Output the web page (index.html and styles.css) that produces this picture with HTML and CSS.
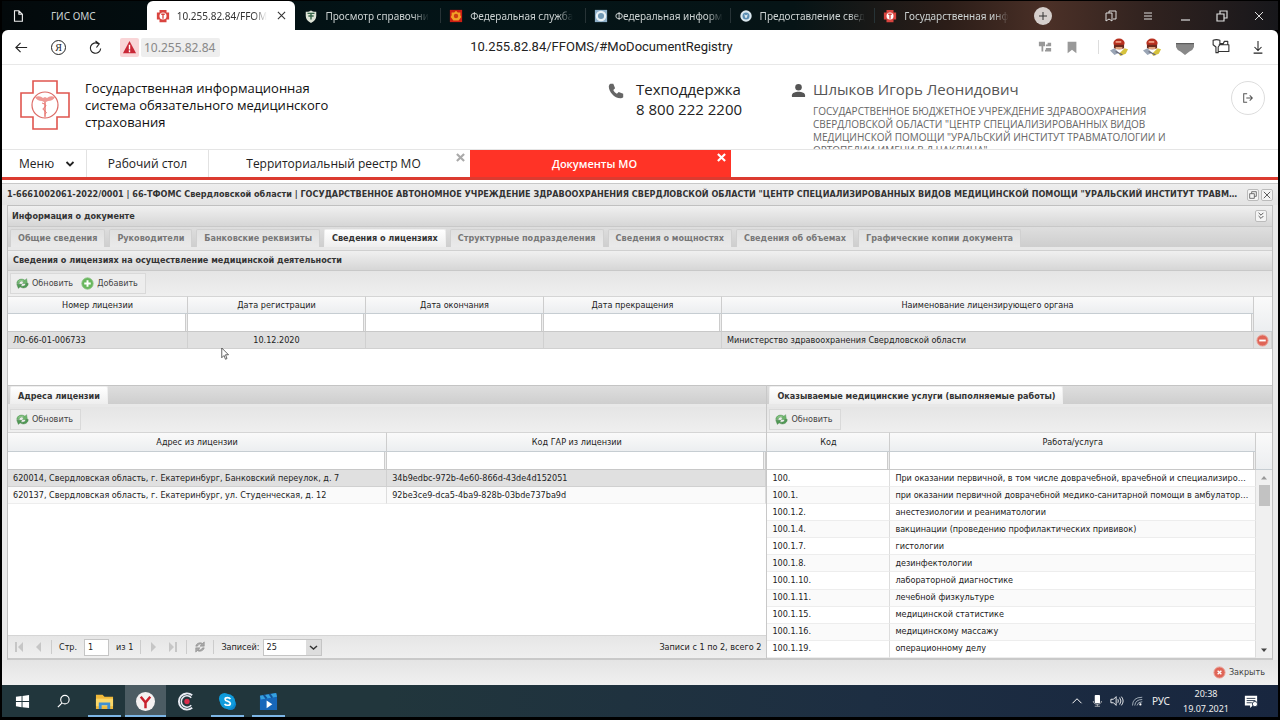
FILE: index.html
```html
<!DOCTYPE html>
<html lang="ru">
<head>
<meta charset="utf-8">
<title>10.255.82.84/FFOMS</title>
<link rel="stylesheet" href="styles.css">
</head>
<body>
<svg class="defs" aria-hidden="true">
  <symbol id="refresh" viewBox="0 0 16 16"><path d="M1 8C1 3 7 1 11 4l2-2 1 6-6 0 1.500-2C7 4 4 5 4 8z" fill="#6db56b" stroke="#56945a" stroke-width=".6"/><path d="M15 8c0 5-6 7-10 4l-2 2-2-5 6 0-1 2c3 1 6 0 6-3z" fill="#4f9a55" stroke="#447f45" stroke-width=".6"/><path d="M3 6q2-3 6-2" fill="none" stroke="#b4dcae" stroke-width=".8"/></symbol>
  <symbol id="add" viewBox="0 0 16 16"><circle cx="8" cy="8" r="7" fill="#68b75d" stroke="#8bc283"/><path d="M8 4v8M4 8h8" stroke="#fff" stroke-width="2.4"/></symbol>
  <symbol id="cross" viewBox="0 0 10 10"><path d="M1 1l8 8M9 1L1 9" fill="none" stroke="currentColor" stroke-width="1.2"/></symbol>
  <symbol id="emblem" viewBox="0 0 16 16"><path d="M4 1h8v3h3v8h-3v3H4v-3H1V4h3z" fill="#d9443f"/><circle cx="8" cy="8" r="4" fill="#fff"/><path d="M6 6h4M8 6v5" stroke="#d9443f" stroke-width="1.5"/></symbol>
  <symbol id="mail" viewBox="0 0 16 16"><ellipse cx="8" cy="4.500" rx="5" ry="4" fill="#b8301f"/><path d="M3.500 6h9v3q-4 2-9 0z" fill="#6c2a1c"/><path d="M5 3.500h5" stroke="#f1a287" stroke-width="1.500"/><path d="M5 8h6v2H5z" fill="#e0a27c"/><path d="M0 11l4-2 4 4-4 2z" fill="#9aa5b5"/><path d="M8 14l5-5 3 1-2 4-5 2z" fill="#d6c23c"/><path d="M5 12l6 3" stroke="#667" stroke-width="1"/></symbol>
  <symbol id="restore" viewBox="0 0 12 12"><path d="M1 4h7v7H1zM4 4V1h7v7H8" fill="none" stroke="currentColor" stroke-width="1.2"/></symbol>
</svg>
<div class="screen">
  <header class="tabbar">
    <nav class="tabs">
      <div class="btab first"><svg class="fav" viewBox="0 0 16 16"><path d="M4 2h5l4 4v8H4zM9 2v4h4" fill="none" stroke="#eee" stroke-width="1.3"/></svg><span>ГИС ОМС</span></div>
      <div class="btab active"><svg class="fav"><use href="#emblem"/></svg><span>10.255.82.84/FFOM</span><button class="plain" aria-label="Закрыть вкладку"><svg class="i10"><use href="#cross"/></svg></button></div>
      <div class="btab"><svg class="fav" viewBox="0 0 16 16"><path d="M2 3q6 0 6-2 0 2 6 2v5q0 5-6 8-6-3-6-8z" fill="#dde3d6"/><path d="M4 5h8M5 8h6M8 5v7" stroke="#37664a" stroke-width="1.600"/></svg><span>Просмотр справочни</span></div>
      <div class="btab"><svg class="fav" viewBox="0 0 16 16"><path fill="#cc1f14" d="M1 1h14v14H1z"/><path d="M8 2l2 2 3 0 0 3 1 2-3 4H5L2 9l1-2V4h3z" fill="#f2a026"/><circle cx="8" cy="8" r="2.500" fill="#cc3b14"/></svg><span>Федеральная служба</span></div>
      <div class="btab"><svg class="fav" viewBox="0 0 16 16"><path fill="#8fb0c9" d="M1 1h14v14H1z"/><circle cx="8" cy="8" r="6" fill="#e9f1f5"/><circle cx="8" cy="8" r="3.500" fill="#7199b5"/></svg><span>Федеральная информ</span></div>
      <div class="btab"><svg class="fav" viewBox="0 0 16 16"><circle cx="8" cy="8" r="6.500" fill="#dbe8ef"/><circle cx="8" cy="8" r="4" fill="#5a8db2"/><path d="M6 6l2 1 2-1-1 4H7z" fill="#dbe8ef"/></svg><span>Предоставление свед</span></div>
      <div class="btab"><svg class="fav"><use href="#emblem"/></svg><span>Государственная инф</span></div>
    </nav>
    <button class="newtab" aria-label="Новая вкладка"><svg viewBox="0 0 10 10"><path d="M5 1v8M1 5h8" stroke="#333" stroke-width="1"/></svg></button>
    <div class="winbtns">
      <button class="plain" aria-label="Закладки"><svg viewBox="0 0 12 12"><path d="M1 3h6v8L4 9l-3 2zM4 3V1h7v8l-3 0" fill="none" stroke="currentColor"/></svg></button>
      <button class="plain" aria-label="Настройки"><svg viewBox="0 0 12 12"><path d="M2 3h8M2 6h8M2 9h8" stroke="currentColor"/></svg></button>
      <button class="plain" aria-label="Свернуть"><svg viewBox="0 0 12 12"><path d="M2 10h9" stroke="currentColor" stroke-width="1.200"/></svg></button>
      <button class="plain" aria-label="Развернуть"><svg viewBox="0 0 12 12"><use href="#restore"/></svg></button>
      <button class="plain" aria-label="Закрыть"><svg viewBox="0 0 12 12"><path d="M2 2l8 8M10 2l-8 8" stroke="currentColor"/></svg></button>
    </div>
  </header>

  <div class="browser">
    <div class="addressbar">
      <div class="addr-left">
        <button class="plain" aria-label="Назад"><svg class="i16" viewBox="0 0 16 16"><path d="M14 8H3M7 3L2 8l5 5" fill="none" stroke="#222" stroke-width="1.200"/></svg></button>
        <button class="plain ya" aria-label="Яндекс">Я</button>
        <button class="plain" aria-label="Обновить страницу"><svg class="i16" viewBox="0 0 16 16"><path d="M11 4a5.500 5.500 0 102.500 5M8 1l4 3-3 4" fill="none" stroke="#222" stroke-width="1.200"/></svg></button>
        <div class="site"><span class="warn"><svg viewBox="0 0 16 16"><path d="M8 1l7 13H1z" fill="#c92736"/><path d="M8 5v5M8 11v2" stroke="#fff" stroke-width="1.500"/></svg></span><span class="host">10.255.82.84</span></div>
      </div>
      <div class="url">10.255.82.84/FFOMS/#MoDocumentRegistry</div>
      <div class="addr-right">
        <svg viewBox="0 0 16 16" fill="#999"><path d="M1 2h7v5H6v6H4V7H1zM9 5h2V3h4v4H9zM9 9h6v4H8v-2h1z"/></svg>
        <svg class="mark" viewBox="0 0 16 16"><path d="M3 2h10v13l-5-4-5 4z" fill="#999"/></svg>
        <i class="vsep"></i>
        <svg class="big" viewBox="0 0 16 16"><use href="#mail"/></svg>
        <svg class="big" viewBox="0 0 16 16"><use href="#mail"/></svg>
        <svg class="big" viewBox="0 0 16 16"><path d="M0 5h16v3q-1 3-4 4l-4 3-4-3q-3-1-4-4z" fill="#888"/><path d="M0 5h16" stroke="#555"/></svg>
        <svg class="big keys" viewBox="0 0 16 16"><path d="M1 2q3-1 6 0v4L5.500 8v5h-2V8L1 6zM7 5h3l1-2h3v3M6 6h9v6H6" fill="none" stroke="#333" stroke-linejoin="round"/></svg>
        <svg class="down" viewBox="0 0 16 16"><path d="M8 1v11M4 8l4 4 4-4M3 15h10" fill="none" stroke="#222" stroke-width="1.200"/></svg>
      </div>
    </div>

    <header class="site-head">
      <svg class="logo" viewBox="0 0 52 52"><path d="M14 2h24v12h12v24H38v12H14V38H2V14h12z" fill="#fff" stroke="#e0564f" stroke-width="1.600"/><circle cx="26" cy="26" r="13" fill="none" stroke="#dc6b66" stroke-width="1.200"/><path d="M16 18q5-2 8 1l2-1 2 1q3-3 8-1-2 4-7 4l-2 1v14l-1 3-1-3V23l-2-1q-5 0-7-4z" fill="#ee9995"/><path d="M23 24q6 2 3 4-4 2 0 4 3 2 0 3" fill="none" stroke="#e77a75" stroke-width="1"/></svg>
      <h1>Государственная информационная<br>система обязательного медицинского<br>страхования</h1>
      <div class="support"><svg viewBox="0 0 20 20"><path d="M4 2l3 0 2 5-2 2c1 2 2 3 4 4l2-2 5 2v4c-1 1-2 1-3 1C8 18 2 11 2 5c0-1 1-3 2-3z" fill="#666"/></svg><p>Техподдержка<br>8 800 222 2200</p></div>
      <div class="user"><svg viewBox="0 0 16 16"><circle cx="8" cy="4.500" r="3.500" fill="#555"/><path d="M1 15v-2c0-5 14-5 14 0v2z" fill="#555"/></svg>
        <div><h2>Шлыков Игорь Леонидович</h2><p>ГОСУДАРСТВЕННОЕ БЮДЖЕТНОЕ УЧРЕЖДЕНИЕ ЗДРАВООХРАНЕНИЯ<br>СВЕРДЛОВСКОЙ ОБЛАСТИ "ЦЕНТР СПЕЦИАЛИЗИРОВАННЫХ ВИДОВ<br>МЕДИЦИНСКОЙ ПОМОЩИ "УРАЛЬСКИЙ ИНСТИТУТ ТРАВМАТОЛОГИИ И<br>ОРТОПЕДИИ ИМЕНИ В.Д.ЧАКЛИНА"</p></div></div>
      <button class="logout" aria-label="Выход"><svg viewBox="0 0 14 14"><path d="M6 2H2v10h4M5 7h7M9 4l3 3-3 3" fill="none" stroke="#555" stroke-width="1.200"/></svg></button>
    </header>

    <nav class="menu">
      <button class="m-menu">Меню<svg viewBox="0 0 10 8"><path d="M1.500 2L5 5.500 8.500 2" fill="none" stroke="#222" stroke-width="1.800"/></svg></button>
      <button class="m-desk">Рабочий стол</button>
      <div class="m-tab"><button class="plain">Территориальный реестр МО</button><button class="plain x" aria-label="Закрыть реестр"><svg viewBox="0 0 10 10"><path d="M1 1l8 8M9 1L1 9" stroke="#aaa" stroke-width="2.400"/></svg></button></div>
      <div class="m-tab on"><button class="plain">Документы МО</button><button class="plain x" aria-label="Закрыть документы"><svg viewBox="0 0 10 10"><path d="M1 1l8 8M9 1L1 9" stroke="#fff" stroke-width="2.400"/></svg></button></div>
    </nav>

    <main class="window">
      <div class="win-title"><h3>1-6661002061-2022/0001 | 66-ТФОМС Свердловской области | ГОСУДАРСТВЕННОЕ АВТОНОМНОЕ УЧРЕЖДЕНИЕ ЗДРАВООХРАНЕНИЯ СВЕРДЛОВСКОЙ ОБЛАСТИ "ЦЕНТР СПЕЦИАЛИЗИРОВАННЫХ ВИДОВ МЕДИЦИНСКОЙ ПОМОЩИ "УРАЛЬСКИЙ ИНСТИТУТ ТРАВМАТОЛОГИИ И ОРТОПЕДИИ"</h3>
        <button class="tool" aria-label="Восстановить"><svg><use href="#restore"/></svg></button><button class="tool" aria-label="Закрыть окно"><svg><use href="#cross"/></svg></button></div>
      <div class="win-body">
        <div class="panel-head info">Информация о документе<button class="tool" aria-label="Развернуть панель"><svg viewBox="0 0 10 10"><path d="M2 1l3 3 3-3M2 5l3 3 3-3" fill="none" stroke="currentColor" stroke-width="1.200"/></svg></button></div>
        <nav class="strip doc">
          <button>Общие сведения</button><button>Руководители</button><button>Банковские реквизиты</button><button class="on">Сведения о лицензиях</button><button>Структурные подразделения</button><button>Сведения о мощностях</button><button>Сведения об объемах</button><button>Графические копии документа</button>
        </nav>
        <div class="panel-head lic">Сведения о лицензиях на осуществление медицинской деятельности</div>
        <div class="tbar"><div class="group"><button><svg><use href="#refresh"/></svg>Обновить</button><button><svg><use href="#add"/></svg>Добавить</button></div></div>
        <div class="lic-grid">
          <table>
            <colgroup><col class="c-num"><col class="c-lic"><col class="c-lic"><col class="c-lic"><col><col class="c-act"></colgroup>
            <thead>
              <tr><th>Номер лицензии</th><th>Дата регистрации</th><th>Дата окончания</th><th>Дата прекращения</th><th>Наименование лицензирующего органа</th><th rowspan="2"></th></tr>
              <tr class="filter"><td><input aria-label="Фильтр: номер лицензии"></td><td><input aria-label="Фильтр: дата регистрации"></td><td><input aria-label="Фильтр: дата окончания"></td><td><input aria-label="Фильтр: дата прекращения"></td><td><input aria-label="Фильтр: орган"></td></tr>
            </thead>
            <tbody><tr class="sel"><td>ЛО-66-01-006733</td><td class="mid">10.12.2020</td><td></td><td></td><td>Министерство здравоохранения Свердловской области</td><td class="act"><button class="plain" aria-label="Удалить лицензию"><svg viewBox="0 0 14 14"><circle cx="7" cy="7" r="6" fill="#df6557" stroke="#eaa096"/><path d="M3.500 7h7" stroke="#fff" stroke-width="2"/></svg></button></td></tr></tbody>
          </table>
        </div>
        <div class="split">
          <section class="pane">
            <nav class="strip sub"><button class="on">Адреса лицензии</button></nav>
            <div class="tbar"><div class="group"><button><svg><use href="#refresh"/></svg>Обновить</button></div></div>
            <div class="fill">
            <table>
              <thead><tr><th>Адрес из лицензии</th><th>Код ГАР из лицензии</th></tr>
              <tr class="filter"><td><input aria-label="Фильтр: адрес"></td><td><input aria-label="Фильтр: код ГАР"></td></tr></thead>
              <tbody>
                <tr class="sel"><td>620014, Свердловская область, г. Екатеринбург, Банковский переулок, д. 7</td><td>34b9edbc-972b-4e60-866d-43de4d152051</td></tr>
                <tr class="alt"><td>620137, Свердловская область, г. Екатеринбург, ул. Студенческая, д. 12</td><td>92be3ce9-dca5-4ba9-828b-03bde737ba9d</td></tr>
              </tbody>
            </table>
            </div>
            <div class="paging">
              <button aria-label="Первая"><svg viewBox="0 0 12 12"><path d="M2 1h2v10H2zM10 1v10L5 6z" fill="#c6c6c6"/></svg></button>
              <button aria-label="Предыдущая"><svg viewBox="0 0 12 12"><path d="M9 1v10L4 6z" fill="#c6c6c6"/></svg></button>
              <i class="psep"></i>
              <label for="page">Стр.</label><input id="page" value="1"><span>из 1</span>
              <i class="psep"></i>
              <button aria-label="Следующая"><svg viewBox="0 0 12 12"><path d="M3 1v10l5-5z" fill="#c6c6c6"/></svg></button>
              <button aria-label="Последняя"><svg viewBox="0 0 12 12"><path d="M2 1v10l5-5zM8 1h2v10H8z" fill="#c6c6c6"/></svg></button>
              <i class="psep"></i>
              <button aria-label="Обновить список"><svg viewBox="0 0 14 14"><path d="M2 6c1-4 6-5 8-3l2-2v5H7l2-2C7 3 5 4 4 6zM12 8c-1 4-6 5-8 3l-2 2V8h5l-2 2c2 1 4 0 5-2z" fill="#aaa" stroke="#777" stroke-width=".5"/></svg></button>
              <i class="psep"></i>
              <label for="size">Записей:</label>
              <select id="size"><option>25</option></select>
              <span class="total">Записи с 1 по 2, всего 2</span>
            </div>
          </section>
          <section class="pane right">
            <nav class="strip sub"><button class="on">Оказываемые медицинские услуги (выполняемые работы)</button></nav>
            <div class="tbar"><div class="group"><button><svg><use href="#refresh"/></svg>Обновить</button></div></div>
            <table>
              <colgroup><col class="c-code"><col><col class="c-scr"></colgroup>
              <thead><tr><th>Код</th><th>Работа/услуга</th><th rowspan="2"></th></tr>
              <tr class="filter"><td><input aria-label="Фильтр: код"></td><td><input aria-label="Фильтр: работа"></td></tr></thead>
            </table>
            <div class="scroll">
              <table class="services">
                <colgroup><col class="c-code"><col></colgroup>
                <tbody>
                <tr><td>100.</td><td>При оказании первичной, в том числе доврачебной, врачебной и специализированной помощи</td></tr>
                <tr class="alt"><td>100.1.</td><td>при оказании первичной доврачебной медико-санитарной помощи в амбулаторных условиях</td></tr>
                <tr><td>100.1.2.</td><td>анестезиологии и реаниматологии</td></tr>
                <tr class="alt"><td>100.1.4.</td><td>вакцинации (проведению профилактических прививок)</td></tr>
                <tr><td>100.1.7.</td><td>гистологии</td></tr>
                <tr class="alt"><td>100.1.8.</td><td>дезинфектологии</td></tr>
                <tr><td>100.1.10.</td><td>лабораторной диагностике</td></tr>
                <tr class="alt"><td>100.1.11.</td><td>лечебной физкультуре</td></tr>
                <tr><td>100.1.15.</td><td>медицинской статистике</td></tr>
                <tr class="alt"><td>100.1.16.</td><td>медицинскому массажу</td></tr>
                <tr><td>100.1.19.</td><td>операционному делу</td></tr>
                </tbody>
              </table>
              <div class="bar"><svg viewBox="0 0 8 8"><path d="M1 5.500h6L4 2z" fill="#999"/></svg><i class="thumb"></i><svg viewBox="0 0 8 8"><path d="M1 2.500h6L4 6z" fill="#444"/></svg></div>
            </div>
          </section>
        </div>
      </div>
      <footer class="win-foot"><button><svg viewBox="0 0 14 14"><circle cx="7" cy="7" r="6" fill="#df6557" stroke="#eaa096"/><path d="M5 5l4 4M9 5L5 9" stroke="#fff" stroke-width="1.500"/></svg>Закрыть</button></footer>
    </main>
  </div>

  <footer class="taskbar">
    <div class="apps">
      <button aria-label="Пуск"><svg viewBox="0 0 16 16"><path d="M1 3l6-1v5.500H1zM8 2l7-1v6.500H8zM1 8.500h6V14l-6-1zM8 8.500h7V15l-7-1z" fill="#fff"/></svg></button>
      <button aria-label="Поиск"><svg viewBox="0 0 16 16"><circle cx="9.500" cy="6" r="4.500" fill="none" stroke="#fff" stroke-width="1.200"/><path d="M6.500 9.500L2 14" stroke="#fff" stroke-width="1.300"/></svg></button>
      <button class="run" aria-label="Проводник"><svg class="l" viewBox="0 0 20 20"><path d="M1 3h7l2 2h9v13H1z" fill="#f0b93a"/><path d="M1 7h18v8H1z" fill="#fbd767"/><path d="M4 11h12v7h-3v-4H7v4H4z" fill="#3f8fd2"/></svg></button>
      <button class="run cur" aria-label="Яндекс Браузер"><svg class="l" viewBox="0 0 20 20"><circle cx="10" cy="10" r="10" fill="#f5f1f1"/><path d="M5 5l5 6 5-6M10 11v6" fill="none" stroke="#c8202c" stroke-width="2.600"/></svg></button>
      <button aria-label="Клиент"><svg class="l" viewBox="0 0 20 20"><path d="M16 3.500a8.500 8.500 0 100 13" fill="none" stroke="#e9ecf4" stroke-width="2"/><path d="M15 6a6 6 0 100 8" fill="none" stroke="#e9ecf4" stroke-width="1.600"/><circle cx="10.500" cy="10" r="2.800" fill="#d92b4b"/></svg></button>
      <button class="run" aria-label="Skype"><svg class="l" viewBox="0 0 20 20"><circle cx="7" cy="7" r="6" fill="#0e9bdb"/><circle cx="13" cy="13" r="6" fill="#0c85cd"/><circle cx="10" cy="10" r="8" fill="#109bdc"/><path d="M13 7.500c-1-2-5.500-2-5.500 0 0 2.500 5.500 2 5.500 4.500s-5 2.500-6 .5" fill="none" stroke="#fff" stroke-width="1.800"/></svg></button>
      <button class="run" aria-label="Видео"><svg class="l" viewBox="0 0 20 20"><path d="M1 4l17-3 1 5v13H1z" fill="#1767ba"/><path d="M1 4l17-3 1 4L2 8z" fill="#35a0df"/><path d="M5 3l3 4M11 2l3 4" stroke="#135196" stroke-width="2"/><path d="M8 9l6 4-6 4z" fill="#fff"/></svg></button>
    </div>
    <div class="tray">
      <svg viewBox="0 0 16 16"><path d="M2 11l6-6 6 6" fill="none" stroke="#fff" stroke-width="1.300"/></svg>
      <svg viewBox="0 0 16 16"><rect x="5" y="0" width="7" height="11" rx="1" fill="#fff"/><path d="M3 8c0 6 11 6 11 0M8.500 12v3M5 15h7" fill="none" stroke="#ccc"/></svg>
      <svg class="snd" viewBox="0 0 16 16"><path d="M1 6h3l3-3v10l-3-3H1zM9 6q1 2 0 4M11 4q3 4 0 8M13 3q4 5 0 10" fill="none" stroke="#fff"/></svg>
      <svg viewBox="0 0 16 16"><path d="M2 14Q2 3 15 3M5 14q1-8 10-8M8 14q1-5 7-5" fill="none" stroke="#aab5bf" stroke-width="1.200"/><circle cx="12.500" cy="12.500" r="1.500" fill="#fff"/></svg>
      <span class="lang">РУС</span>
      <time>20:38<br>19.07.2021</time>
      <svg class="note" viewBox="0 0 16 16"><path d="M1 2h14v11h-5l-3 3v-3H1z" fill="#fff"/><path d="M3 5h10M3 7.500h10M3 10h6" stroke="#1c2b42"/><circle cx="12.500" cy="11.500" r="3" fill="#fff" stroke="#1c2b42"/></svg>
    </div>
  </footer>
  <svg class="cursor" viewBox="0 0 12 18"><path d="M1 1v13l3-3 2 5 2-1-2-5h4z" fill="#fff" stroke="#333"/></svg>
</div>
</body>
</html>
```
FILE: styles.css
```css
* { box-sizing: border-box; }
html, body { height: 100%; }
body { margin: 0; background: #000; font: 9px/13px "DejaVu Sans Condensed", "DejaVu Sans", sans-serif; color: #222; }
h1, h2, h3, p { margin: 0; font-weight: 400; }
button, input, select { font: inherit; color: inherit; margin: 0; }
button { background: none; border: 0; padding: 0; white-space: nowrap; }
svg { display: block; flex: none; }
i { flex: none; }
.defs { position: absolute; width: 0; height: 0; }
.plain { display: block; }
.i10 { width: 9px; height: 9px; }
.i16 { width: 15px; height: 15px; }
.screen { position: relative; height: 100vh; min-height: 640px; padding: 1px 2px 3px; display: flex; flex-direction: column; overflow: hidden; }

/* browser tabs */
.tabbar { flex: none; display: flex; align-items: center; height: 29px; font: 10px/16px "Noto Sans", sans-serif; color: #ccd2d2; background: linear-gradient(90deg, #03090b, #031417 30%, #061416 62%, #2b1d18 74%, #4b3027 82%, #30221f 90%, #17171b); }
.tabs { flex: 1; display: flex; align-self: stretch; min-width: 0; }
.btab { flex: 1 1 0; min-width: 0; display: flex; align-items: center; gap: 7px; padding: 0 5px 0 9px; position: relative; }
.btab + .btab::before { content: ""; position: absolute; left: 0; top: 7px; height: 15px; width: 1px; background: #273336; }
.btab span { overflow: hidden; white-space: nowrap; -webkit-mask-image: linear-gradient(90deg, #000 85%, transparent); mask-image: linear-gradient(90deg, #000 85%, transparent); }
.btab.first span { flex: none; padding-left: 19px; mask-image: none; -webkit-mask-image: none; }
.btab.active { background: #fff; color: #333; border-radius: 6px 6px 0 0; padding-right: 9px; }
.btab.active .plain { margin-left: auto; }
.btab.active::before, .btab.active + .btab::before { display: none; }
.fav { width: 14px; height: 14px; }
.newtab { width: 18px; height: 18px; border-radius: 50%; background: #d5cfcc; margin-left: 15px; display: flex; align-items: center; justify-content: center; }
.newtab svg { width: 10px; height: 10px; }
.winbtns { display: flex; gap: 25px; margin: 0 13px 0 53px; color: #ddd; }
.winbtns svg { width: 12px; height: 12px; }

.browser { flex: 1; min-height: 0; display: flex; flex-direction: column; background: #fff; border-radius: 6px 6px 0 0; }
.addressbar { flex: none; height: 35px; display: grid; grid-template-columns: 6fr auto 7fr; align-items: center; border-bottom: 1px solid #e8e8e8; padding: 0 13px 0 12px; }
.url { font: 13px/20px Roboto, sans-serif; }
.addr-left { display: flex; align-items: center; gap: 22px; }
.ya { width: 15px; height: 15px; border: 1px solid #222; border-radius: 50%; font: 10px/13px "Liberation Serif", serif; text-align: center; }
.site { display: flex; gap: 2px; margin-left: -5px; }
.warn { background: #f9d5d7; padding: 2px; border-radius: 2px; }
.warn svg { width: 15px; height: 15px; }
.host { background: #eee; color: #888; padding: 0 5px 0 3px; border-radius: 2px; font: 12px/19px "Noto Sans", sans-serif; }
.addr-right { display: flex; align-items: center; justify-content: flex-end; gap: 15px; }
.addr-right svg { width: 14px; height: 14px; }
.addr-right .mark { margin-right: 4px; margin-left: -2px; }
.addr-right .big { width: 18px; height: 18px; }
.addr-right .keys { margin-left: 3px; }
.addr-right .down { margin-left: 6px; }
.vsep { width: 1px; height: 14px; background: #ddd; margin-right: -4px; }

/* site header */
.site-head { flex: none; height: 84px; overflow: hidden; display: flex; align-items: flex-start; font-family: "Open Sans", sans-serif; padding: 0 13px 0 17px; }
.logo { width: 52px; height: 52px; margin-top: 14px; }
h1 { font-size: 13px; line-height: 17px; font-weight: 500; color: #111; margin: 15px 0 0 14px; flex: 0 0 522px; }
.support { flex: 0 0 184px; display: flex; gap: 11px; margin-top: 14px; font-size: 15px; line-height: 20px; color: #222; }
.support svg { width: 18px; height: 18px; margin-top: 3px; }
.user { flex: 1; display: flex; gap: 7px; margin-top: 14px; color: #555; }
.user svg { width: 15px; height: 15px; margin-top: 4px; }
h2 { font-size: 15px; line-height: 20px; }
.user p { font-size: 10px; line-height: 13px; margin-top: 6px; white-space: nowrap; color: #666; }
.logout { width: 34px; height: 34px; border: 1px solid #ddd; border-radius: 50%; margin-top: 16px; display: flex; align-items: center; justify-content: center; }
.logout svg { width: 12px; height: 12px; }

.menu { flex: none; display: flex; height: 31px; border-top: 1px solid #e5e5e5; border-bottom: 3px solid #db3b30; font: 12px/27px "Open Sans", sans-serif; color: #222; }
.m-menu { width: 85px; display: flex; align-items: center; justify-content: space-between; padding: 0 11px 0 17px; border-right: 1px solid #e2e2e2; }
.m-menu svg { width: 10px; height: 8px; }
.m-desk { width: 122px; border-right: 1px solid #e2e2e2; }
.m-tab { position: relative; width: 261px; text-align: center; }
.m-tab > .plain:first-child { width: 100%; padding-right: 12px; }
.m-tab.on { background: #ff3326; color: #fff; font-size: 11px; font-weight: 600; }
.m-tab .x { position: absolute; top: 3px; right: 5px; }
.x svg { width: 9px; height: 9px; }

/* document window */
.window { flex: 1; min-height: 0; display: flex; flex-direction: column; margin-top: 3px; background: #e9e9e9; border-top: 1px solid #c8c8c8; }
.win-title { flex: none; height: 21px; display: flex; align-items: center; padding: 0 5px; gap: 2px; background: linear-gradient(#eee, #e3e3e3); }
h3 { flex: 1; font-size: 9px; font-weight: 700; color: #333; overflow: hidden; white-space: nowrap; text-overflow: ellipsis; padding-right: 4px; }
.tool { width: 12px; height: 12px; border: 1px solid #bbb; background: #f4f4f4; display: flex; align-items: center; justify-content: center; color: #555; border-radius: 2px; }
.tool svg { width: 8px; height: 8px; }
.tool use { width: 8px; height: 8px; }
.win-body { flex: 1; min-height: 0; display: flex; flex-direction: column; margin: 0 5px; border: 1px solid #c0c0c0; border-bottom: 2px solid #c9c9c9; }
.panel-head { flex: none; display: flex; align-items: center; justify-content: space-between; height: 21px; padding: 0 5px 0 4px; font-weight: 700; color: #333; background: linear-gradient(#f0f0f0, #d6d6d6); border-bottom: 1px solid #c8c8c8; }
.lic { border-top: 1px solid #d0d0d0; padding-left: 5px; }
.strip { flex: none; display: flex; align-items: flex-end; gap: 3px; padding: 0 2px; background: linear-gradient(#dedede, #cecece); border-bottom: 3px solid #e8e8e8; }
.doc { height: 23px; gap: 4px; }
.sub { height: 22px; border-top: 1px solid #c4c4c4; }
.strip button { height: 18px; padding: 0 7px; font-weight: 700; color: #777; background: linear-gradient(#e0e0e0, #eaeaea); border: 1px solid #d0d0d0; border-bottom: 0; border-radius: 2px 2px 0 0; line-height: 16px; }
.doc button { padding-bottom: 2px; }
.strip button.on { background: linear-gradient(#fff, #eee); color: #333; border-color: #eee; }
.tbar { flex: none; height: 25px; display: flex; align-items: center; padding: 0 2px; background: linear-gradient(#e5e5e5, #efefef); }
.group { display: flex; gap: 8px; padding: 0 7px 0 5px; height: 21px; align-items: center; border: 1px solid #d9d9d9; background: #ededed; }
.group button { display: flex; align-items: center; gap: 3px; color: #444; }
.group svg { width: 13px; height: 13px; }
table { width: 100%; border-collapse: separate; border-spacing: 0; table-layout: fixed; }
.c-num { width: 180px; }
.c-lic { width: 178px; }
.c-act { width: 18px; }
.c-code { width: 123px; }
.c-scr { width: 16px; }
th { height: 18px; padding: 0; font-weight: 400; text-align: center; background: linear-gradient(#fafafa, #eceef0); border-right: 1px solid #cdcdcd; border-top: 1px solid #d5d5d5; border-bottom: 1px solid #c6cdd2; }
th:last-child { border-right: 0; }
.split th { height: 20px; }
td { height: 17px; padding: 0 5px; line-height: 15px; overflow: hidden; white-space: nowrap; text-overflow: ellipsis; border-right: 1px solid #ddd; border-bottom: 1px solid #ededed; }
.filter td { height: 18px; padding: 0; background: #eee; border-bottom: 1px solid #c8c8c8; border-right-color: #ccc; }
.filter input { display: block; width: calc(100% - 1px); height: 17px; border: 0; border-right: 1px solid #ccc; background: #fff; }
.sel td { background: #e0e0e0; border-color: #d0d0d0; }
.alt td { background: #fafafa; }
.mid { text-align: center; }
td.act { padding: 0 0 0 2px; }
.act svg { width: 13px; height: 13px; }
.lic-grid { flex: none; min-height: 89px; background: #fff; }
.split { flex: 1; min-height: 0; display: grid; grid-template-columns: 3fr 2fr; grid-template-rows: minmax(0, 1fr); }
.pane { min-width: 0; min-height: 0; display: flex; flex-direction: column; background: #fff; }
.right { border-left: 1px solid #c8c8c8; }
.fill { flex: 1; min-height: 0; }
.scroll { flex: 1; min-height: 0; display: flex; }
.services { flex: 1; height: 100%; }
.services td { height: auto; }
.bar { flex: 0 0 16px; background: #f0f0f0; display: flex; flex-direction: column; align-items: center; padding: 4px 0; }
.bar svg { width: 8px; height: 8px; }
.thumb { width: 11px; height: 21px; background: #c2c2c2; margin: 3px 0 auto; }
.paging { flex: none; height: 23px; display: flex; align-items: center; gap: 7px; padding: 0 5px; border-top: 1px solid #d5d5d5; background: linear-gradient(#e6e6e6, #efefef); }
.paging svg { width: 12px; height: 12px; }
.psep { width: 1px; height: 14px; background: #ccc; }
.paging input { width: 25px; height: 17px; padding: 0 3px; border: 1px solid #c5c5c5; background: #fff; }
.paging select { width: 59px; height: 17px; margin-left: -4px; padding: 0 3px; border: 1px solid #c5c5c5; border-radius: 0; appearance: none; background: #fff url("data:image/svg+xml,%3Csvg xmlns='http://www.w3.org/2000/svg' width='15' height='15'%3E%3Cpath fill='%23ddd' d='M0 0h15v15H0z'/%3E%3Cpath d='M4 6l3.500 3L11 6' fill='none' stroke='%23333' stroke-width='1.500'/%3E%3C/svg%3E") no-repeat right center; }
.total { margin-left: auto; }
.win-foot { flex: none; height: 25px; display: flex; align-items: center; justify-content: flex-end; padding: 0 13px; background: linear-gradient(#e4e4e4, #f0f0f0); }
.win-foot button { display: flex; align-items: center; gap: 3px; color: #444; }
.win-foot svg { width: 13px; height: 13px; }

/* taskbar */
.taskbar { flex: none; height: 32px; display: flex; justify-content: space-between; background: linear-gradient(90deg, #21363c, #21363c 30%, #1d2e42 68%, #18263f); color: #eee; font: 9px/15px "Noto Sans", sans-serif; }
.apps { display: flex; }
.apps button { width: 41px; display: flex; align-items: center; justify-content: center; position: relative; }
.apps svg { width: 15px; height: 15px; }
.apps .l { width: 19px; height: 19px; }
.run::after { content: ""; position: absolute; left: 4px; right: 4px; bottom: 0; height: 2px; background: #7db6e6; }
.cur { background: #4c5c63; }
.cur::after { left: 0; right: 0; }
.tray { display: flex; align-items: center; gap: 8px; padding-right: 20px; }
.tray svg { width: 12px; height: 12px; }
.tray .snd { width: 14px; height: 14px; margin: 0 -1px; }
.lang { font-size: 10px; margin-left: 1px; }
time { text-align: center; margin: 0 7px 0 5px; }
.tray .note { width: 14px; height: 14px; }

.cursor { position: absolute; left: 221px; top: 347px; width: 9px; height: 14px; }
```
